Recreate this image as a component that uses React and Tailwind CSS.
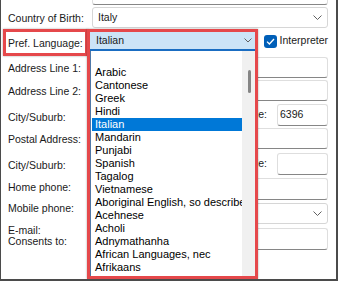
import React from "react";

const languages = [
  "",
  "Arabic",
  "Cantonese",
  "Greek",
  "Hindi",
  "Italian",
  "Mandarin",
  "Punjabi",
  "Spanish",
  "Tagalog",
  "Vietnamese",
  "Aboriginal English, so described",
  "Acehnese",
  "Acholi",
  "Adnymathanha",
  "African Languages, nec",
  "Afrikaans",
  "Akan",
];

const Chevron = () => (
  <svg width="9" height="5" viewBox="0 0 9 5" className="shrink-0">
    <path d="M0.5 0.5 L4.5 4.5 L8.5 0.5" fill="none" stroke="#606060" strokeWidth="1" />
  </svg>
);

// plain text box, light border with darker underline
const Field = ({ className = "", children }) => (
  <div
    className={`flex items-center rounded-[3px] border border-[#dedede] border-b-[#868686] bg-white pl-[2px] ${className}`}
  >
    {children}
  </div>
);

const Combo = ({ className = "", children }) => (
  <div
    className={`flex items-center justify-between rounded-[3px] border border-[#d6d6d6] bg-white pl-[5px] pr-[5px] ${className}`}
  >
    <span>{children}</span>
    <Chevron />
  </div>
);

const labels = [
  ["Country of Birth:", "mt-[12px]"],
  ["Pref. Language:", "mt-[13px]"],
  ["Address Line 1:", "mt-[13px]"],
  ["Address Line 2:", "mt-[11px]"],
  ["City/Suburb:", "mt-[14px]"],
  ["Postal Address:", "mt-[10px]"],
  ["City/Suburb:", "mt-[14px]"],
  ["Home phone:", "mt-[10px]"],
  ["Mobile phone:", "mt-[9px]"],
  ["E-mail:", "mt-[10px]"],
  ["Consents to:", "mt-[-1px]"],
];

const App = () => {
  return (
    <div className="relative w-[338px] h-[281px] overflow-hidden bg-white border-l border-r-2 border-b-2 border-[#4b4b4b] font-['Liberation_Sans',Arial,sans-serif] text-[10.5px] text-[#1a1a1a]">
      <div className="flex">
        {/* labels */}
        <div className="flex flex-col w-[91px] pl-[7px]">
          {labels.map(([text, mt], i) => (
            <div key={i} className={`h-[12px] leading-[12px] whitespace-nowrap ${mt}`}>
              {text}
            </div>
          ))}
        </div>

        {/* fields */}
        <div className="flex flex-col w-[236px]">
          <div className="h-[5px] rounded-b-[3px] border-x border-b border-[#dedede] border-b-[#868686]" />
          <Combo className="mt-[2px] h-[21px]">Italy</Combo>

          <div className="mt-[3px] h-[20px] flex items-center">
            {/* sits under the open dropdown */}
            <Combo className="w-[163px] h-full" />
            <div className="ml-[9px] w-[13px] h-[13px] rounded-[3px] bg-[#005fb8] flex items-center justify-center">
              <svg width="9" height="7" viewBox="0 0 9 7">
                <path d="M1 3.6 L3.4 6 L8 1" fill="none" stroke="#ffffff" strokeWidth="1.3" />
              </svg>
            </div>
            <span className="ml-[3px]">Interpreter</span>
          </div>

          <Field className="mt-[6px] h-[21px]" />
          <Field className="mt-[2px] h-[21px]" />

          <div className="mt-[3px] h-[22px] flex items-center">
            <Field className="w-[122px] h-full" />
            <span className="flex-1 text-right pr-[10px]">Postcode:</span>
            <Field className="w-[51px] h-full">6396</Field>
          </div>

          <Field className="mt-[2px] h-[21px]" />

          <div className="mt-[4px] h-[22px] flex items-center">
            <Field className="w-[122px] h-full" />
            <span className="flex-1 text-right pr-[10px]">Postcode:</span>
            <Field className="w-[51px] h-full" />
          </div>

          <Field className="mt-[3px] h-[22px]" />
          <Combo className="mt-[3px] h-[21px]" />
          <Field className="mt-[4px] h-[22px]" />
        </div>
      </div>

      {/* highlight on the label */}
      <div className="absolute left-[2px] top-[29px] w-[85px] h-[27px] border-[3px] border-[#e5484b] shadow-[0_0_2px_rgba(0,0,0,0.35)]" />

      {/* open dropdown, highlighted */}
      <div className="absolute left-[86px] top-[29px] w-[171px] h-[250px] border-[3px] border-[#e5484b] bg-white flex flex-col shadow-[0_0_2px_rgba(0,0,0,0.35)]">
        <div className="h-[19px] shrink-0 flex items-center justify-between bg-[#cce4f7] border-b-2 border-[#1a6dc2] pl-[6px] pr-[3px]">
          <span>Italian</span>
          <svg width="8" height="5" viewBox="0 0 8 5">
            <path d="M0.5 0.5 L4 4 L7.5 0.5" fill="none" stroke="#606060" strokeWidth="1" />
          </svg>
        </div>
        <div className="flex-1 min-h-0 flex border-l border-[#4f78a8] overflow-hidden">
          <div className="flex-1 min-w-0 pl-[1px] pt-[2px] text-black text-[11px]">
            {languages.map((lang, i) => (
              <div
                key={i}
                className={`h-[13px] leading-[13px] pl-[3px] whitespace-nowrap overflow-hidden ${
                  lang === "Italian" ? "bg-[#0078d7] text-white" : ""
                }`}
              >
                {lang}
              </div>
            ))}
          </div>
          <div className="relative w-[13px] shrink-0 bg-[#f0f0f0]">
            <div className="absolute left-[6px] top-[19px] w-[3px] h-[23px] rounded-full bg-[#858585]" />
          </div>
        </div>
      </div>
    </div>
  );
};

export default App;
